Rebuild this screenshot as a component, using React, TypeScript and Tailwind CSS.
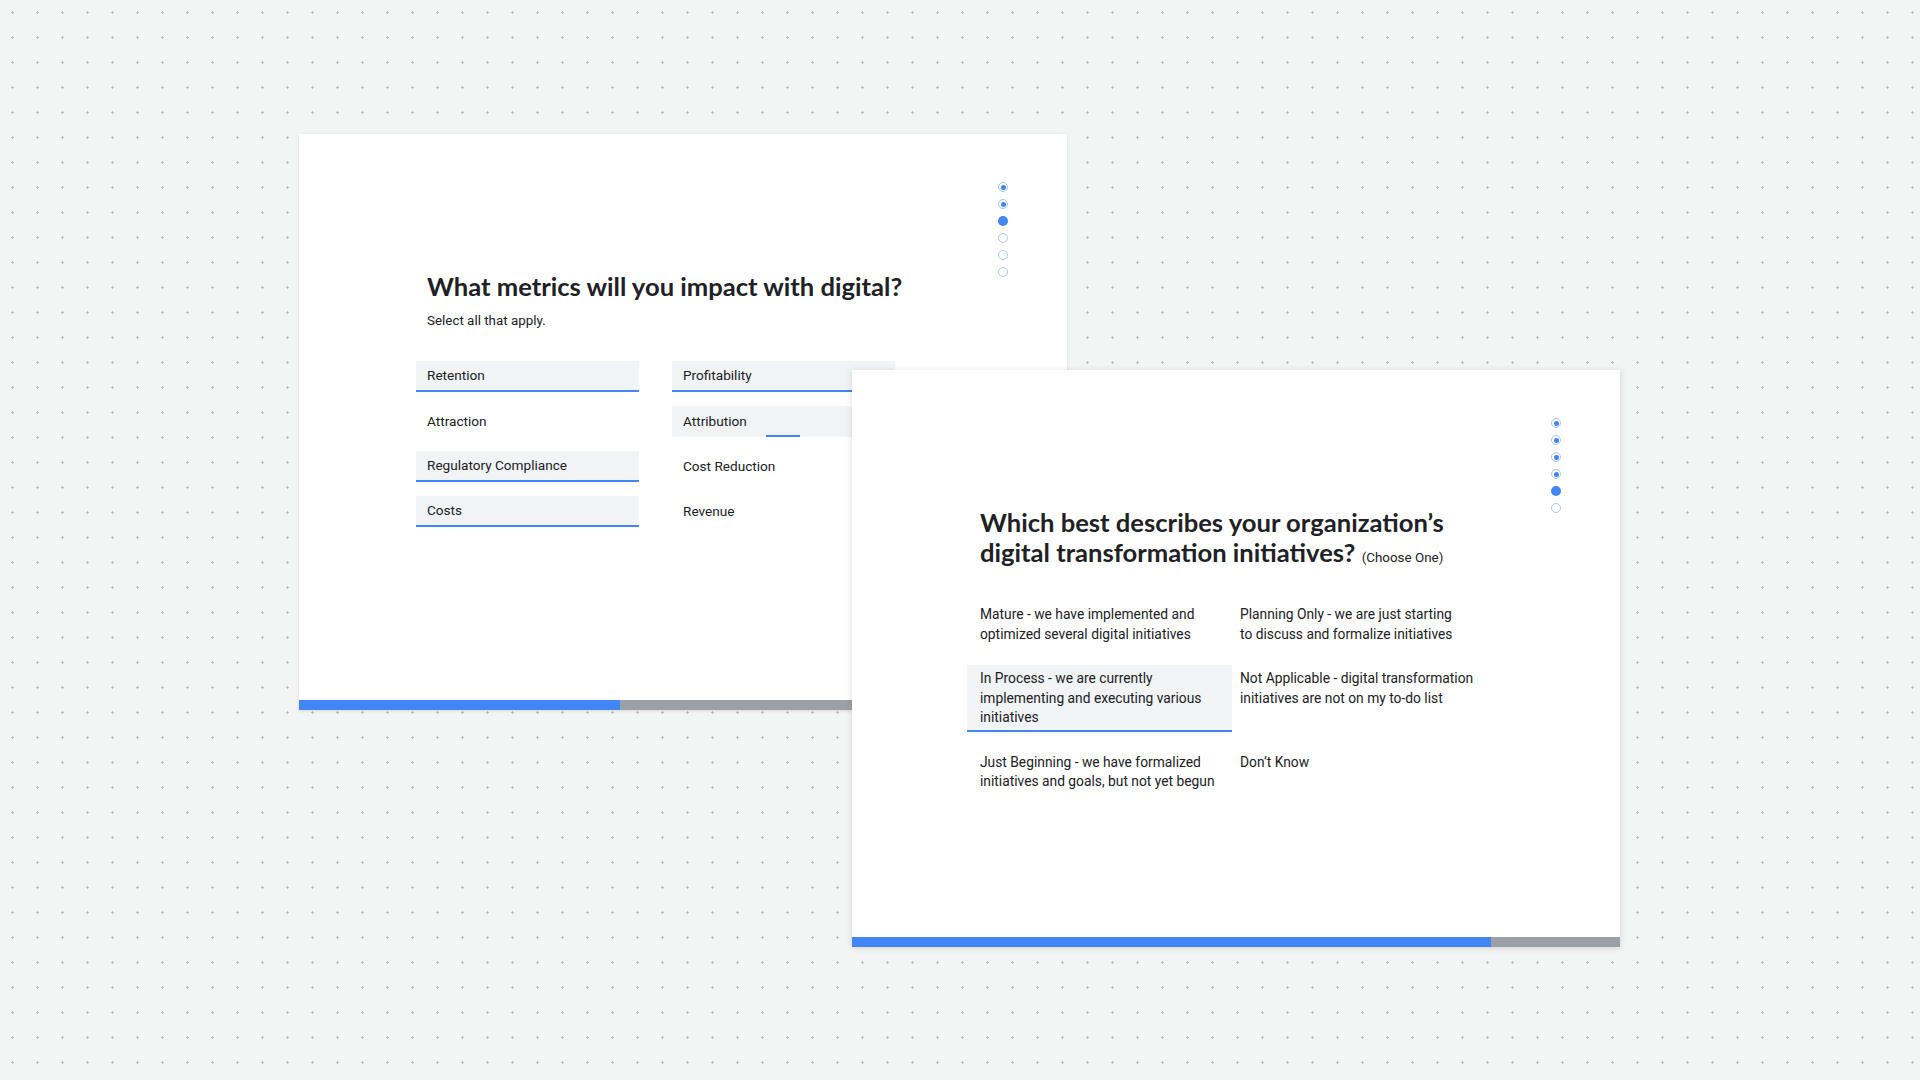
import React from "react";

type Step = "done" | "current" | "todo";

const heading = "font-[Lato,'Open_Sans',sans-serif]";
const body = "font-[Roboto,'Noto_Sans',sans-serif]";

function StepDots({ steps }: { steps: Step[] }) {
  return (
    <div className="absolute right-[59px] top-[48px] flex flex-col gap-[7px]">
      {steps.map((s, i) =>
        s === "current" ? (
          <div key={i} className="w-[10px] h-[10px] rounded-full bg-[#4285f4]" />
        ) : s === "done" ? (
          <div
            key={i}
            className="w-[10px] h-[10px] rounded-full border border-[#a9c6f8] flex items-center justify-center"
          >
            <div className="w-[5px] h-[5px] rounded-full bg-[#4285f4]" />
          </div>
        ) : (
          <div key={i} className="w-[10px] h-[10px] rounded-full border border-[#a9c6f8]" />
        )
      )}
    </div>
  );
}

function Progress({ done }: { done: string }) {
  return (
    <div className="flex h-[10px] w-full">
      <div className={`${done} bg-[#4285f4]`} />
      <div className="flex-1 bg-[#9aa0a6]" />
    </div>
  );
}

function MetricOption({ label, selected, focus }: { label: string; selected?: boolean; focus?: boolean }) {
  return (
    <div
      className={`relative h-[31px] w-[223px] pl-[11px] flex items-center text-[13.6px] text-[#202124] ${
        selected ? "bg-[#f1f3f4] border-b-2 border-[#4285f4]" : focus ? "bg-[#f1f3f4]" : ""
      }`}
    >
      {label}
      {focus && <div className="absolute bottom-0 left-[94px] w-[34px] h-[2px] bg-[#4285f4]" />}
    </div>
  );
}

function MaturityOption({ children, selected }: { children: React.ReactNode; selected?: boolean }) {
  return (
    <div
      className={`px-[13px] pt-[4px] pb-[2px] whitespace-nowrap text-[13.8px] leading-[19.5px] text-[#202124] border-b-2 ${
        selected ? "bg-[#f1f3f4] border-[#4285f4] w-[265px]" : "border-transparent w-[260px]"
      }`}
    >
      {children}
    </div>
  );
}

export default function App() {
  return (
    <div
      className={`relative w-[1920px] h-[1080px] overflow-hidden bg-[#f3f4f4] bg-[radial-gradient(circle,#b9bdbd_1px,transparent_1.4px)] bg-[length:25px_25px] ${body}`}
    >
      {/* ── Card 1: metrics ───────────────────────────────────────────── */}
      <div className="absolute left-[299px] top-[134px] w-[768px] h-[576px] bg-white shadow-[0_1px_3px_rgba(60,64,67,0.15)] flex flex-col">
        <StepDots steps={["done", "done", "current", "todo", "todo", "todo"]} />
        <div className="flex-1 pl-[128px] pt-[136px]">
          <h1 className={`${heading} text-[25.6px] leading-[32px] font-bold text-[#202124]`}>
            What metrics will you impact with digital?
          </h1>
          <p className="mt-[10px] text-[13.4px] leading-[18px] text-[#202124]">Select all that apply.</p>
          <div className="-ml-[11px] mt-[31px] grid grid-cols-[223px_223px] gap-x-[33px] gap-y-[14px]">
            <MetricOption label="Retention" selected />
            <MetricOption label="Profitability" selected />
            <MetricOption label="Attraction" />
            <MetricOption label="Attribution" focus />
            <MetricOption label="Regulatory Compliance" selected />
            <MetricOption label="Cost Reduction" />
            <MetricOption label="Costs" selected />
            <MetricOption label="Revenue" />
          </div>
        </div>
        <Progress done="w-[321px]" />
      </div>

      {/* ── Card 2: maturity ──────────────────────────────────────────── */}
      <div className="absolute left-[852px] top-[370px] w-[768px] h-[577px] bg-white shadow-[0_1px_6px_rgba(60,64,67,0.18)] flex flex-col">
        <StepDots steps={["done", "done", "done", "done", "current", "todo"]} />
        <div className="flex-1 pl-[128px] pt-[137px]">
          <h1 className={`${heading} text-[25.6px] leading-[30px] font-bold text-[#202124]`}>
            Which best describes your organization’s
            <br />
            digital transformation initiatives?{" "}
            <span className={`${body} text-[13.4px] font-normal`}>(Choose One)</span>
          </h1>
          <div className="-ml-[13px] mt-[28px] grid grid-cols-[260px_260px] gap-y-[17px]">
            <MaturityOption>
              Mature - we have implemented and
              <br />
              optimized several digital initiatives
            </MaturityOption>
            <MaturityOption>
              Planning Only - we are just starting
              <br />
              to discuss and formalize initiatives
            </MaturityOption>
            <MaturityOption selected>
              In Process - we are currently
              <br />
              implementing and executing various
              <br />
              initiatives
            </MaturityOption>
            <MaturityOption>
              Not Applicable - digital transformation
              <br />
              initiatives are not on my to-do list
            </MaturityOption>
            <MaturityOption>
              Just Beginning - we have formalized
              <br />
              initiatives and goals, but not yet begun
            </MaturityOption>
            <MaturityOption>Don’t Know</MaturityOption>
          </div>
        </div>
        <Progress done="w-[639px]" />
      </div>
    </div>
  );
}
